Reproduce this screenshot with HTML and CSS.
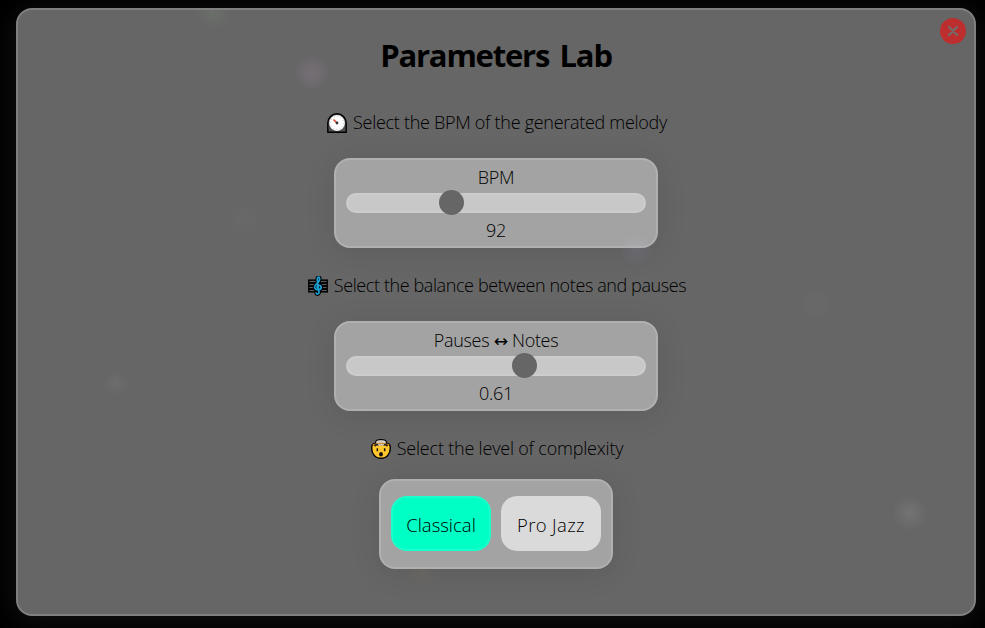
FILE: index.html
```html
<!DOCTYPE html>
<html lang="en">
<head>
<meta charset="utf-8">
<title>Parameters Lab</title>
<link rel="stylesheet" href="styles.css">
</head>
<body>
<main class="panel">
  <button class="close" aria-label="Close">
    <svg viewBox="0 0 10 10" width="10" height="10"><path d="M1 1L9 9M9 1L1 9" stroke="#756a6a" stroke-width="2.4" stroke-linecap="round"/></svg>
  </button>
  <h1>Parameters Lab</h1>

  <p class="prompt">
    <svg class="icon" viewBox="0 0 20 20"><path d="M.8 19.2V10a9.2 9.2 0 0 1 18.4 0v9.2z" fill="#505050" stroke="#000" stroke-width="1.4"/><circle cx="10" cy="10" r="7.9" fill="#fff"/><circle cx="10" cy="10" r="6.6" fill="none" stroke="#aaa" stroke-width="1" stroke-dasharray=".7 2.756"/><path d="M10 10L6.500 6.500" stroke="#e8452c" stroke-width="1.5"/><circle cx="10" cy="10" r="1.4" fill="#333"/></svg>
    <span class="t1">Select the BPM of the generated melody</span>
  </p>
  <section class="card">
    <label class="label bpm">BPM</label>
    <div class="track"><span class="thumb low"></span></div>
    <output class="value">92</output>
  </section>

  <p class="prompt">
    <svg class="icon" viewBox="0 0 20 20"><path d="M0 3.400H20V16.600H0z" fill="#050505"/><path d="M1.500 5.500H18.500M1.500 8.500H18.500M1.500 11.500H18.500M1.500 14.500H18.500" stroke="#5d5d5d"/><path d="M8.200 16.500c-.2 2 3 2.200 2.800-.4L9.300 4.500C9 2.400 10 1 11 1.200c1.500 1 .6 4-1.400 5.600C7.500 8.500 6.200 10 6.800 12c.8 2.600 6.300 2.500 6.400-.5.100-2.600-4-2.800-4.200-.4 0 1 .5 1.400 1.200 1.600" fill="none" stroke="#000" stroke-width="3.800"/><path d="M8.200 16.500c-.2 2 3 2.200 2.800-.4L9.300 4.500C9 2.400 10 1 11 1.200c1.500 1 .6 4-1.400 5.600C7.500 8.500 6.200 10 6.800 12c.8 2.600 6.300 2.500 6.400-.5.100-2.600-4-2.800-4.200-.4 0 1 .5 1.400 1.200 1.600" fill="none" stroke="#1ba1d4" stroke-width="1.700"/></svg>
    <span class="t2">Select the balance between notes and pauses</span>
  </p>
  <section class="card">
    <label class="label pn">Pauses <span class="arrow">↔</span> Notes</label>
    <div class="track"><span class="thumb high"></span></div>
    <output class="value">0.61</output>
  </section>

  <p class="prompt">
    <svg class="icon" viewBox="0 0 20 20"><path d="M.8 7.500C1 5.500 3 4.500 5 4.300 4 1.500 7 .7 10 .7s6 .8 5 3.600c2 .2 4 1.200 4.200 3.200C20 14 16 19.300 10 19.300S0 14 .8 7.500z" fill="#ffc62e" stroke="#000" stroke-width="1.400"/><path d="M5.300 2.600Q6 1.300 10 1.300t4.700 1.300L14.500 5H5.500z" fill="#cfcfcf"/><path d="M1.800 6.200Q4 5 7 5.200L8 4.500h4l1 .7q3-.2 5.200 1" fill="none" stroke="#e5850c" stroke-width="1.500"/><path d="M3.500 7Q5.500 5 8 6M16.500 7Q14.500 5 12 6" stroke="#222" stroke-width="1.800" fill="none"/><path d="M7 4.800h6v1.700H7z" fill="#bbb"/><path d="M5.600 9.300h1.500v3H5.600zM12.900 9.300h1.500v3h-1.500z" fill="#111"/><ellipse cx="10" cy="15.300" rx="1.900" ry="2.200" fill="#111"/></svg>
    <span class="t3">Select the level of complexity</span>
  </p>
  <section class="card choices">
    <button class="choice active">Classical</button>
    <button class="choice jazz">Pro Jazz</button>
  </section>
</main>
</body>
</html>
```
FILE: styles.css
```css
* { box-sizing: border-box; }
body {
  margin: 0;
  height: 628px;
  padding: 8px 9px 12px 16px;
  overflow: hidden;
  background: #000;
  color: #000;
  font: 300 18px/26px "Open Sans", "Noto Sans", sans-serif;
}
.panel {
  position: relative;
  height: 608px;
  display: flex;
  flex-direction: column;
  align-items: center;
  border: 2px solid #808080;
  border-radius: 16px;
  box-shadow: 0 4px 30px rgba(255, 255, 255, .08);
  background:
    radial-gradient(circle at 294px 63px, #777077 0, #706c70 8px, rgba(102, 102, 102, 0) 18px),
    radial-gradient(circle at 892px 503px, #737373 0, #6d6d6d 8px, rgba(102, 102, 102, 0) 18px),
    radial-gradient(circle at 98px 373px, #6d6d6d 0, rgba(102, 102, 102, 0) 13px),
    radial-gradient(circle at 195px 2px, #6b706a 0, rgba(102, 102, 102, 0) 17px),
    radial-gradient(circle at 618px 238px, #716e78 0, rgba(102, 102, 102, 0) 18px),
    radial-gradient(circle at 798px 293px, #686868 11px, rgba(102, 102, 102, 0) 14px),
    radial-gradient(circle at 226px 209px, #686868 6px, rgba(102, 102, 102, 0) 17px),
    radial-gradient(circle at 404px 562px, #6d6a66 0, rgba(102, 102, 102, 0) 16px),
    #666;
}
.close {
  position: absolute;
  top: 8px;
  right: 8px;
  width: 26px;
  height: 26px;
  display: grid;
  place-items: center;
  padding: 0;
  border: 0;
  border-radius: 50%;
  background: #bd2e2e;
}
h1 {
  margin: 23px 0 0;
  height: 45px;
  font-size: 31px;
  line-height: 44px;
  font-weight: 700;
  letter-spacing: -1.2px;
  word-spacing: 3.5px;
  white-space: nowrap;
}
.panel > * { flex-shrink: 0; }
.prompt {
  display: flex;
  align-items: center;
  gap: 6px;
  height: 26px;
  margin: 25px 0 22px;
  padding-left: 2px;
  white-space: nowrap;
}
.prompt span { padding-bottom: 2px; }
h1 + .prompt { margin-top: 32px; }
.icon { width: 20px; height: 20px; }
.t1 { letter-spacing: -.29px; }
.t2 { letter-spacing: -.4px; }
.t3 { letter-spacing: -.2px; }
.card {
  width: 324px;
  height: 90px;
  display: flex;
  flex-direction: column;
  align-items: center;
  padding: 4px 10px;
  border: 2px solid #b0b0b0;
  border-radius: 16px;
  background:
    radial-gradient(circle at 300px 92px, #aba9b0 0, rgba(163, 163, 163, 0) 18px) no-repeat,
    #a3a3a3;
  box-shadow: 0 4px 30px rgba(0, 0, 0, .1);
}
.pn, .bpm { white-space: nowrap; }
.card > * { flex-shrink: 0; }
.label { height: 29px; letter-spacing: -.3px; }
.track {
  position: relative;
  width: 300px;
  height: 20px;
  border: 2px solid #cdcdcd;
  border-radius: 10px;
  background: #c8c8c8;
}
.thumb {
  position: absolute;
  top: -5px;
  width: 25px;
  height: 25px;
  border-radius: 50%;
  background: #666;
}
.low { left: 91px; }
.high { left: 164px; }
.value { margin-top: 4px; height: 24px; letter-spacing: -.3px; }
.arrow {
  display: inline-block;
  line-height: 20px;
  font-family: "DejaVu Sans", sans-serif;
  font-size: 17px;
  font-weight: 400;
}
.prompt ~ .card:nth-of-type(2), .card.choices { background: #a3a3a3; }
.card.choices {
  width: 234px;
  flex-direction: row;
  gap: 10px;
  margin-top: -5px;
  padding: 3px 10px 4px;
}
.choice {
  width: 100px;
  height: 55px;
  padding: 2px 0 0;
  border: 2px solid #dadada;
  border-radius: 16px;
  background: #dadada;
  color: #000;
  font: inherit;
  font-size: 18.500px;
  white-space: nowrap;
}
.active {
  border-color: #1affcb;
  background: #00ffc4;
}
.jazz { letter-spacing: .35px; }
```
